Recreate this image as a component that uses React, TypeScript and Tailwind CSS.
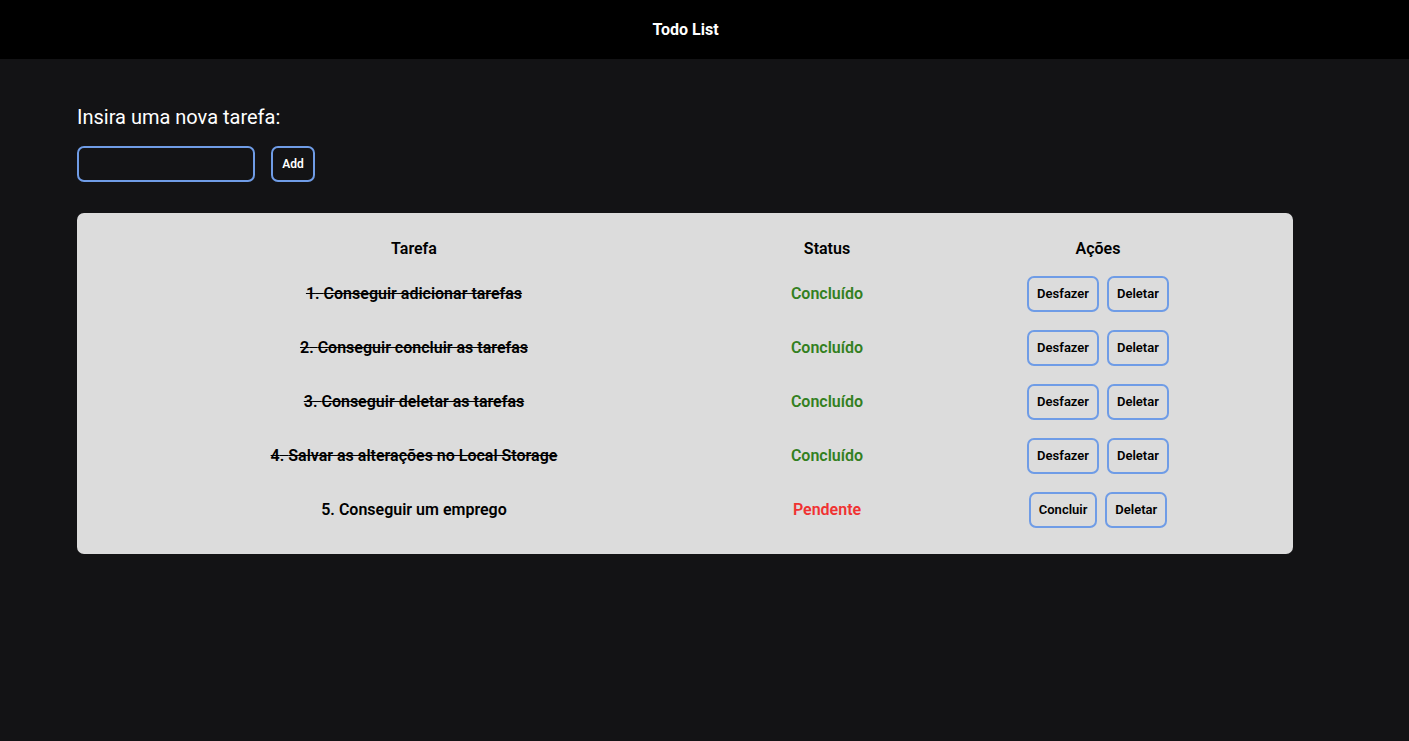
const tasks = [
  { id: 1, text: 'Conseguir adicionar tarefas', done: true },
  { id: 2, text: 'Conseguir concluir as tarefas', done: true },
  { id: 3, text: 'Conseguir deletar as tarefas', done: true },
  { id: 4, text: 'Salvar as alterações no Local Storage', done: true },
  { id: 5, text: 'Conseguir um emprego', done: false },
];

function ActionButton({ label }: { label: string }) {
  return (
    <button className="h-[36px] rounded-[7px] border-2 border-[#6f9ce6] bg-transparent px-[8px] text-[13px] font-semibold text-black">
      {label}
    </button>
  );
}

export default function App() {
  return (
    <div className="min-h-[741px] bg-[#131315] font-['Roboto',sans-serif]">
      <header className="flex h-[59px] items-center justify-center bg-black pr-[38px]">
        <h1 className="text-[16px] font-bold text-white">Todo List</h1>
      </header>

      <main className="px-[77px] pt-[45px]">
        <label className="block text-[20px] leading-[26px] text-white">Insira uma nova tarefa:</label>
        <div className="mt-[16px] flex items-center gap-[16px]">
          <input className="h-[36px] w-[178px] rounded-[7px] border-2 border-[#6f9ce6] bg-transparent px-2 text-white outline-none" />
          <button className="h-[36px] w-[44px] rounded-[7px] border-2 border-[#6f9ce6] text-[12px] font-semibold text-white">
            Add
          </button>
        </div>

        <div className="mt-[31px] w-[1216px] rounded-[7px] bg-[#dcdcdc] px-[20px] pb-[17px] pt-[18px]">
          <div className="grid h-[36px] grid-cols-[634px_192px_350px] items-center text-center text-[16px] font-semibold text-black">
            <div>Tarefa</div>
            <div>Status</div>
            <div>Ações</div>
          </div>
          {tasks.map((t) => (
            <div
              key={t.id}
              className="grid h-[54px] grid-cols-[634px_192px_350px] items-center text-center text-[16px] font-semibold"
            >
              <div className={t.done ? 'text-black line-through' : 'text-black'}>
                {t.id}. {t.text}
              </div>
              <div className={t.done ? 'text-[#33801f]' : 'text-[#f03232]'}>
                {t.done ? 'Concluído' : 'Pendente'}
              </div>
              <div className="flex items-center justify-center gap-[8px]">
                <ActionButton label={t.done ? 'Desfazer' : 'Concluir'} />
                <ActionButton label="Deletar" />
              </div>
            </div>
          ))}
        </div>
      </main>
    </div>
  );
}
